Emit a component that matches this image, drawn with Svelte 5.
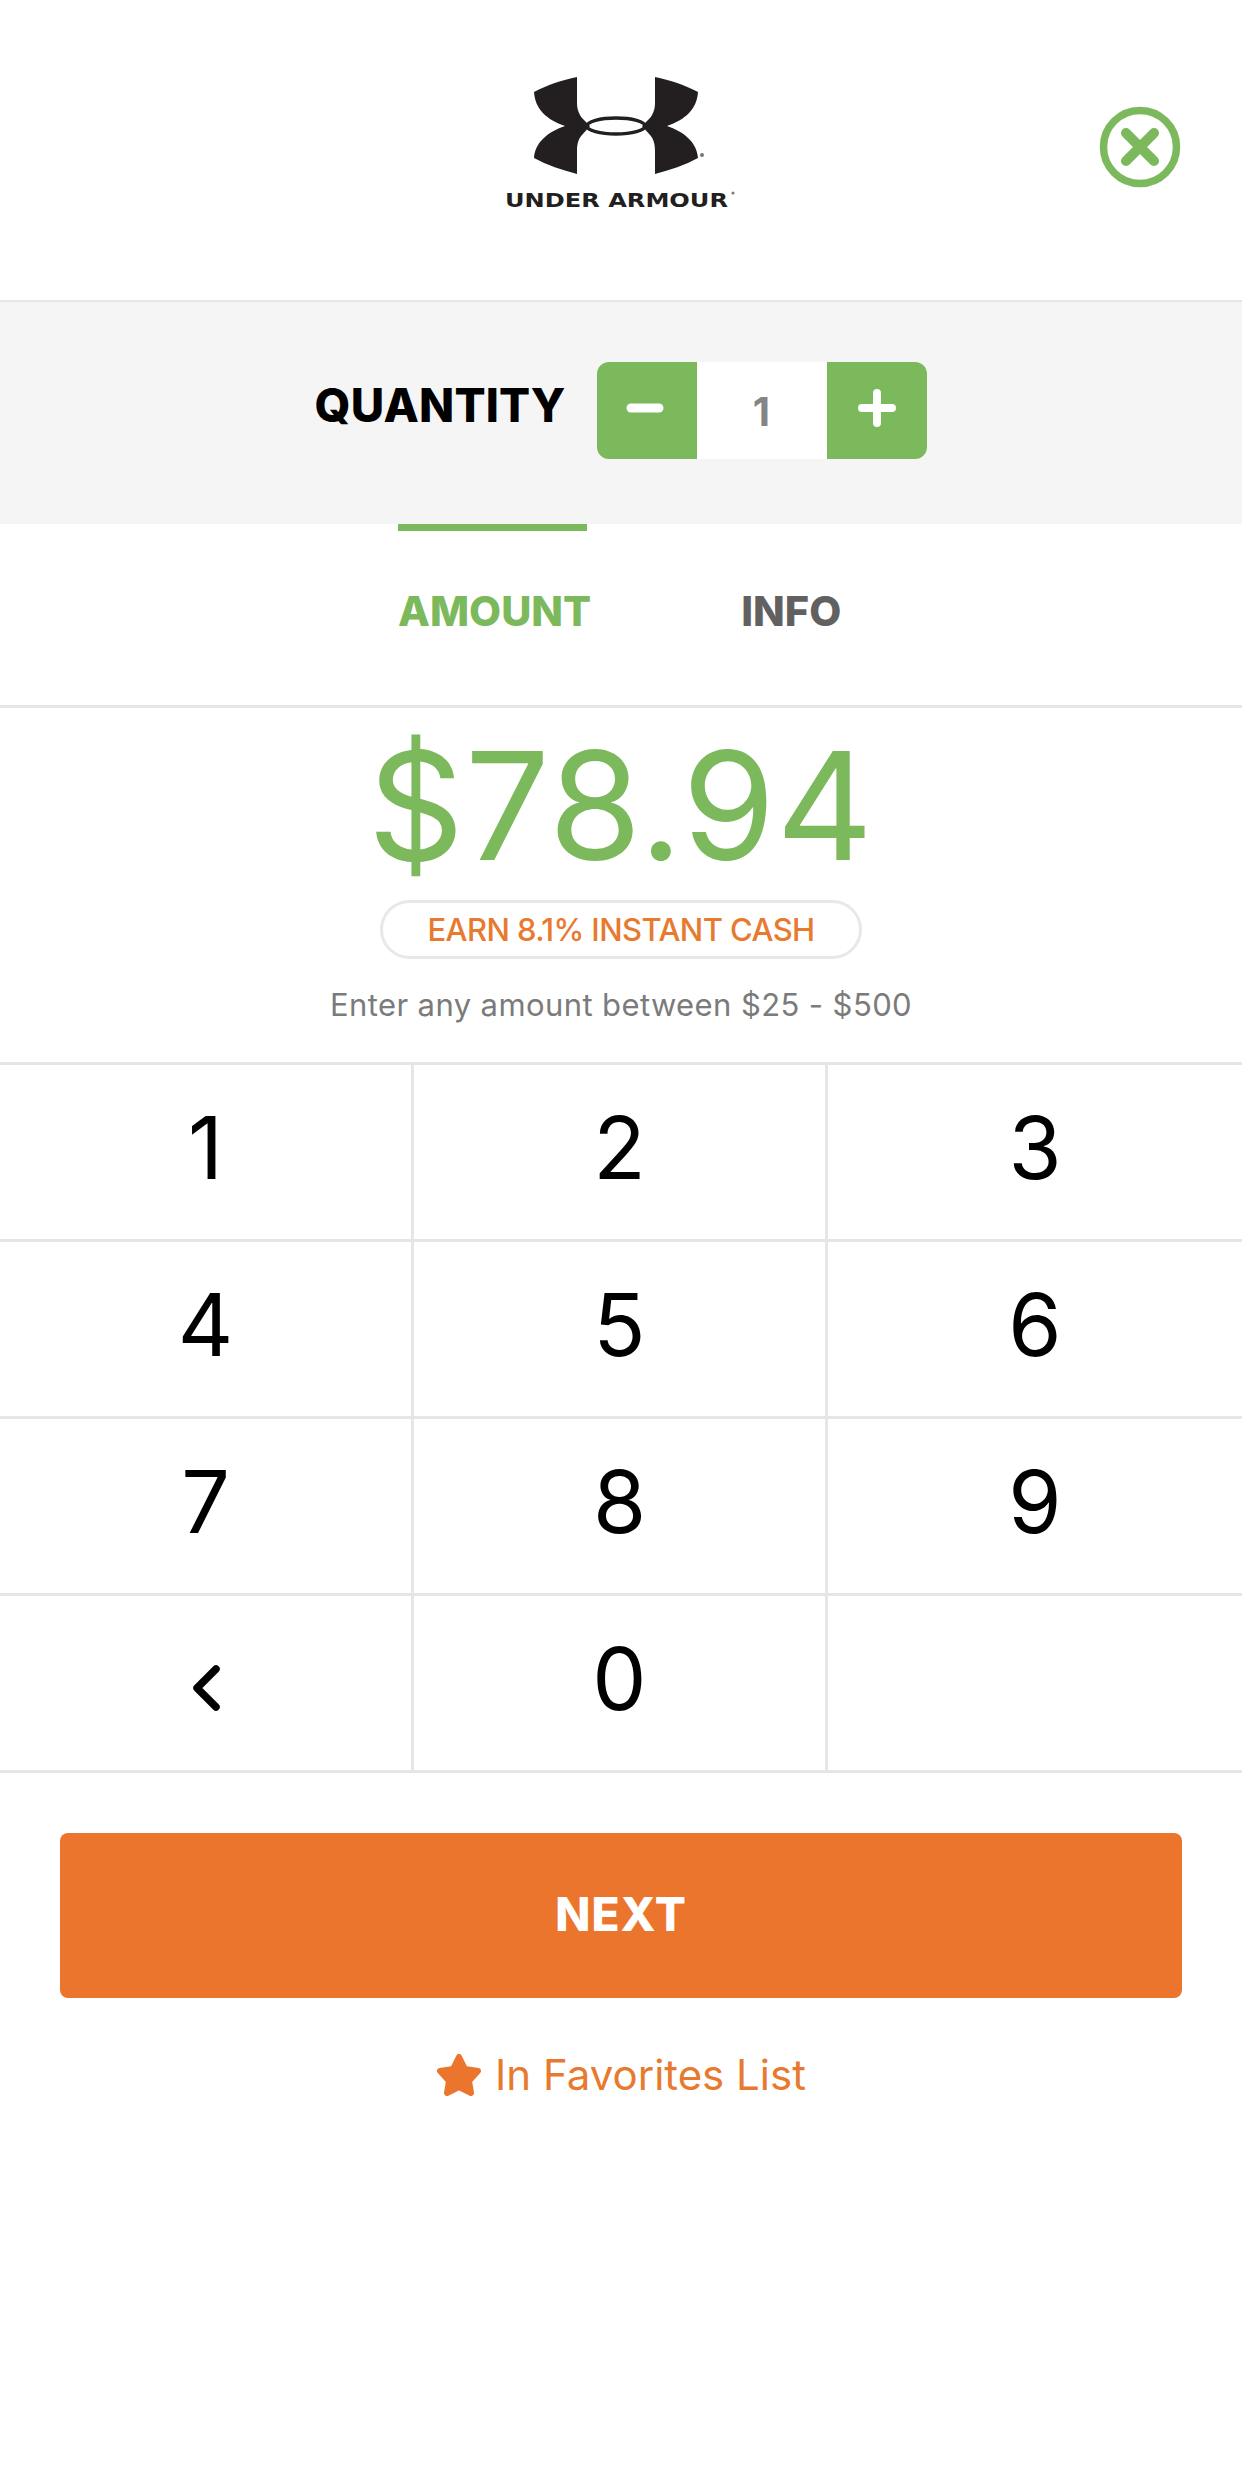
<script>
  const keys = ['1','2','3','4','5','6','7','8','9','<','0',''];
</script>

<div class="page">
  <header class="head">
    <svg class="logo" viewBox="0 0 240 140" width="240" height="140" aria-label="Under Armour logo">
      <g fill="#231f20">
        <path d="M77 0 C62 3 47 8 34 15 C35 32 47 43 65 49 C47 55 35 66 34 81 C47 88 62 93 77 97 L77 74 C77 66 79 61 82 58 L90 49 L83 42 C79 38 77 32 77 26 Z"/>
        <path d="M155 0 C170 3 185 8 198 15 C197 32 185 43 167 49 C185 55 197 66 198 81 C185 88 170 93 155 97 L155 74 C155 66 153 61 150 58 L142 49 L149 42 C153 38 155 32 155 26 Z"/>
      </g>
      <ellipse cx="116" cy="49" rx="29" ry="8" fill="none" stroke="#231f20" stroke-width="3.5"/>
      <circle cx="202" cy="78" r="2" fill="#777"/>
      <circle cx="233" cy="116" r="1.5" fill="#777"/>
      <text x="5" y="130" class="wordmark" textLength="223" lengthAdjust="spacingAndGlyphs">UNDER ARMOUR</text>
    </svg>
    <svg class="close" viewBox="0 0 84 84" width="84" height="84" aria-label="Close">
      <circle cx="42" cy="42" r="36.5" fill="none" stroke="#7cb85c" stroke-width="7.5"/>
      <path d="M28 28 L56 56 M56 28 L28 56" stroke="#7cb85c" stroke-width="10" stroke-linecap="round"/>
    </svg>
  </header>

  <section class="qty">
    <span class="qty-label">QUANTITY</span>
    <div class="stepper">
      <span class="step minus"><svg viewBox="0 0 38 38" width="38" height="38"><path d="M5 19H33" stroke="#fff" stroke-width="9" stroke-linecap="round"/></svg></span>
      <span class="count">1</span>
      <span class="step"><svg viewBox="0 0 38 38" width="38" height="38"><path d="M4 19H34M19 4V34" stroke="#fff" stroke-width="8" stroke-linecap="round"/></svg></span>
    </div>
  </section>

  <nav class="tabs">
    <span class="tab active">AMOUNT</span>
    <span class="tab">INFO</span>
  </nav>

  <section class="amount">
    <div class="value">$78.94</div>
    <div class="pill">EARN 8.1% INSTANT CASH</div>
    <p class="hint">Enter any amount between $25 - $500</p>
  </section>

  <div class="pad">
    {#each keys as k}
      <div class="key">
        {#if k === '<'}
          <svg class="back" viewBox="0 0 30 48" width="30" height="48" aria-label="Delete"><path d="M25 5 L6 24 L25 43" fill="none" stroke="#000" stroke-width="7.5" stroke-linecap="round" stroke-linejoin="round"/></svg>
        {:else}{k}{/if}
      </div>
    {/each}
  </div>

  <div class="actions">
    <button class="next">NEXT</button>
    <div class="fav">
      <svg viewBox="0 0 46 44" width="46" height="44" aria-hidden="true"><path d="M23 4 L29 16 L42 18 L33 28 L35 40 L23 34 L11 40 L13 28 L4 18 L17 16 Z" fill="#ec752e" stroke="#ec752e" stroke-width="6" stroke-linejoin="round"/></svg>
      <span>In Favorites List</span>
    </div>
  </div>
</div>

<style>
  :global(body) { margin: 0; background: #fff; }
  .page {
    width: 1242px; height: 2484px; background: #fff; overflow: hidden;
    font-family: Inter, "Noto Sans", sans-serif; color: #000;
  }
  .head {
    height: 223px; border-bottom: 2px solid #e6e6e6;
    position: relative; display: flex; justify-content: center; padding-top: 77px;
  }
  .logo { display: block; margin-left: -2px; }
  .wordmark { font: 700 19px "DejaVu Sans", sans-serif; fill: #231f20; }
  .close { position: absolute; left: 1098px; top: 105px; }
  .qty {
    height: 222px; background: #f5f5f5; display: flex; justify-content: center; align-items: flex-start;
    gap: 32px; padding-top: 60px; box-sizing: border-box;
  }
  .qty-label { font-weight: 800; font-size: 46px; line-height: 1; margin-top: 20px; letter-spacing: 0.2px; }
  .stepper { display: flex; height: 97px; border-radius: 12px; overflow: hidden; }
  .step { width: 100px; background: #7cb85c; display: flex; align-items: center; justify-content: center; padding-bottom: 6px; box-sizing: border-box; }
  .step.minus { padding-right: 4px; }
  .count { width: 130px; background: #fff; color: #858585; font-weight: 700; font-size: 40px; display: flex; align-items: center; justify-content: center; padding: 2px 2px 0 0; box-sizing: border-box; }
  .tabs {
    height: 181px; border-bottom: 3px solid #e6e6e6; display: flex; padding-left: 398px; gap: 150px;
  }
  .tab { font-weight: 800; font-size: 41.5px; color: #616161; padding-top: 67px; line-height: 1; height: fit-content; }
  .tab.active { color: #7cb85c; position: relative; }
  .tab.active::before { content: ""; position: absolute; left: 0; top: 0; width: 189px; height: 7px; background: #7cb85c; }
  .amount { height: 354px; display: flex; flex-direction: column; align-items: center; }
  .value { font-weight: 400; font-size: 150px; line-height: 1; color: #7cb85c; margin-top: 23px; letter-spacing: 1px; }
  .pill {
    width: 482px; height: 59px; box-sizing: border-box; border: 3px solid #e8e8e8; border-radius: 30px; margin-top: 19px;
    display: flex; align-items: center; justify-content: center; color: #e77a2f; font-size: 31px; font-weight: 500; letter-spacing: -0.6px;
  }
  .hint { margin: 28px 0 0; font-size: 31px; line-height: 36px; color: #7b7b7b; letter-spacing: 0.4px; }
  .pad { display: grid; grid-template-columns: 414px 414px 414px; border-top: 3px solid #e6e6e6; }
  .key {
    height: 166px; padding-bottom: 8px;
    border-bottom: 3px solid #e6e6e6; border-right: 3px solid #e6e6e6;
    display: flex; align-items: center; justify-content: center; font-size: 86px; color: #000;
  }
  .key:nth-child(3n) { border-right: 0; }
  .back { margin-top: 18px; }
  .actions { display: flex; flex-direction: column; align-items: center; }
  .next {
    width: 1122px; height: 165px; margin-top: 60px; border: 0; border-radius: 8px; background: #ec752e; color: #fff;
    font: 800 46px Inter, sans-serif; letter-spacing: 1px; padding: 0 0 4px;
  }
  .fav { display: flex; align-items: center; gap: 13px; margin-top: 47px; color: #e77a2f; font-size: 42px; line-height: 60px; }
</style>
